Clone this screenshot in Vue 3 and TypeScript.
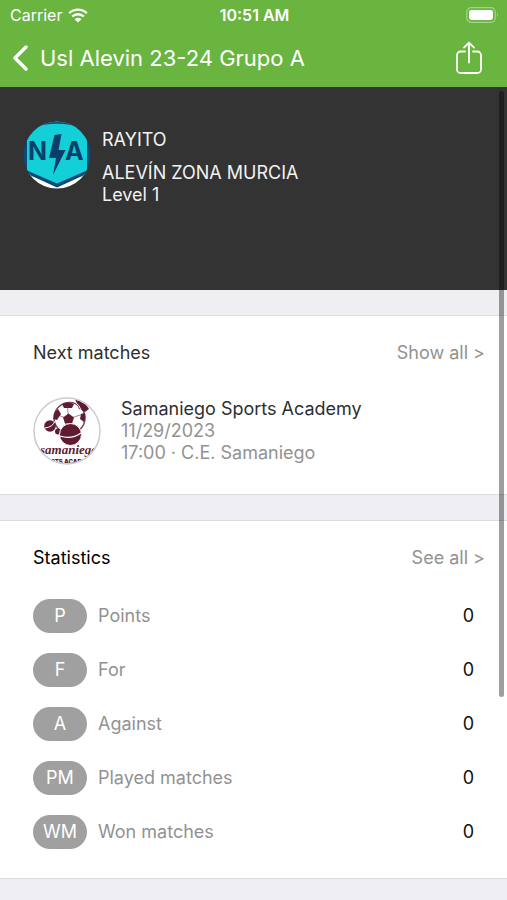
<script setup lang="ts">
interface Stat {
  code: string
  label: string
  value: number
}

const team = { name: 'RAYITO', league: 'ALEVÍN ZONA MURCIA', level: 'Level 1' }

const match = {
  opponent: 'Samaniego Sports Academy',
  date: '11/29/2023',
  place: '17:00 · C.E. Samaniego',
}

const stats: Stat[] = [
  { code: 'P', label: 'Points', value: 0 },
  { code: 'F', label: 'For', value: 0 },
  { code: 'A', label: 'Against', value: 0 },
  { code: 'PM', label: 'Played matches', value: 0 },
  { code: 'WM', label: 'Won matches', value: 0 },
]
</script>

<template>
  <div class="screen">
    <header class="top">
      <div class="status">
        <div class="carrier">
          <span>Carrier</span>
          <svg class="wifi" viewBox="0 0 20 15" aria-hidden="true">
            <path d="M1.2 5.2a12.6 12.6 0 0 1 17.6 0M4.2 8.5a8.4 8.4 0 0 1 11.6 0" fill="none" stroke="currentColor" stroke-width="2.4" />
            <path d="M10 14.6 6.6 11.2a4.9 4.9 0 0 1 6.8 0z" fill="currentColor" />
          </svg>
        </div>
        <time class="clock">10:51 AM</time>
        <svg class="battery" viewBox="0 0 33 16" aria-hidden="true">
          <rect x="0.7" y="0.7" width="28.6" height="14.6" rx="4.5" fill="none" stroke="#fff" stroke-opacity="0.4" stroke-width="1.2" />
          <rect x="3" y="3" width="24" height="10" rx="2.4" fill="#fff" />
          <path d="M31 5.5q1.8 2.5 0 5z" fill="#fff" fill-opacity="0.45" />
        </svg>
      </div>
      <nav class="bar">
        <button class="icon-button back" type="button" aria-label="Back">
          <svg class="chevron" viewBox="0 0 16 26" aria-hidden="true">
            <path d="M14 2 3 13l11 11" fill="none" stroke="currentColor" stroke-width="3.4" stroke-linecap="round" stroke-linejoin="round" />
          </svg>
        </button>
        <h1 class="title">Usl Alevin 23-24 Grupo A</h1>
        <button class="icon-button" type="button" aria-label="Share">
          <svg class="share" viewBox="0 0 28 34" aria-hidden="true">
            <g fill="none" stroke="currentColor" stroke-width="1.8" stroke-linecap="round" stroke-linejoin="round">
              <path d="M10 10.5H5.6A3.6 3.6 0 0 0 2 14.1v14.3A3.6 3.6 0 0 0 5.6 32h16.8a3.6 3.6 0 0 0 3.6-3.6V14.1a3.6 3.6 0 0 0-3.6-3.6H18" />
              <path d="M14 21.5V1.8M9 6.6l5-5 5 5" />
            </g>
          </svg>
        </button>
      </nav>
    </header>

    <main class="content">
      <section class="team">
        <svg class="crest" viewBox="0 0 68 68" role="img" aria-label="Team crest">
          <defs>
            <clipPath id="crest-clip"><circle cx="34" cy="34" r="33.5" /></clipPath>
          </defs>
          <g clip-path="url(#crest-clip)">
            <path d="M2 50 34 66 66 50V68H2z" fill="#fff" />
            <path d="M14 0H54V8H14z" fill="#8fa3a8" />
            <path d="M0 14Q14 4 22 2.200 34 0 46 2.200 54 4 68 14V51L34 66.500 0 51z" fill="#0b4a78" />
            <path d="M4 18Q8 13 11 9.500 15 5 20 4q14-2.500 28 0 5 1 9 5.500 3 3.500 7 8.500V49.500L34 62.500 4 49.500z" fill="#12cfd8" />
          </g>
          <text class="crest-text" x="5" y="39" fill="#0b3f6b">N</text>
          <text class="crest-text" x="42" y="39" fill="#0b3f6b">A</text>
          <path d="M31.500 14 38.500 13 35.500 29H42.500L30 54 33 37H26z" fill="#0b3f6b" />
        </svg>
        <div class="team-text">
          <h2 class="team-name">{{ team.name }}</h2>
          <p>{{ team.league }}</p>
          <p>{{ team.level }}</p>
        </div>
      </section>

      <section class="card">
        <div class="card-head">
          <h2>Next matches</h2>
          <a href="#matches">Show all &gt;</a>
        </div>
        <div class="match">
          <svg class="avatar" viewBox="0 0 68 68" role="img" aria-label="Samaniego crest">
            <defs>
              <clipPath id="avatar-clip"><circle cx="34" cy="34" r="32.5" /></clipPath>
            </defs>
            <circle cx="34" cy="34" r="33" fill="#fff" />
            <g clip-path="url(#avatar-clip)">
              <circle cx="36.5" cy="21" r="15.5" fill="#fff" stroke="#7a4455" stroke-width="1.5" />
              <path d="M35.500 22 34.500 9M35.500 22 22 17M35.500 22 50 17M35.500 22 29 34M35.500 22 44 34" stroke="#a98390" stroke-width="1" />
              <g fill="#5f1c31">
                <path d="M35.500 16.500 41 20.500 39 26.500H32L30 20.500z" />
                <path d="M29 7q6-3 12 0l-2 4h-8zM20.500 22q0-7 4.500-10l3 5-4 6zM48 17l4-1q1 5-1 9l-4-3z" />
                <path d="M42 2 50 3 56 12 52 15 46 12z" />
                <circle cx="17" cy="29" r="5.8" />
                <circle cx="25" cy="34.5" r="3" />
                <circle cx="37.5" cy="37.5" r="11" stroke="#fff" stroke-width="1" />
              </g>
              <path d="M40 3Q47 8 49 15M12 31q8-1 10-7" fill="none" stroke="#fff" stroke-width="1" />
              <path d="M27 39q11 4 21-3" fill="none" stroke="#fff" stroke-width="1.2" />
              <text class="script-text" x="7" y="57" fill="#5f1c31">samaniego</text>
              <text class="block-text" x="34" y="67" text-anchor="middle" fill="#5f1c31">SPORTS ACADEMY</text>
            </g>
            <circle cx="34" cy="34" r="33" fill="none" stroke="#ccc" stroke-width="1.5" />
          </svg>
          <div class="match-text">
            <h3>{{ match.opponent }}</h3>
            <p>{{ match.date }}</p>
            <p>{{ match.place }}</p>
          </div>
        </div>
      </section>

      <section class="card">
        <div class="card-head">
          <h2 class="strong">Statistics</h2>
          <a href="#statistics">See all &gt;</a>
        </div>
        <dl class="stats">
          <div v-for="stat in stats" :key="stat.code" class="stat">
            <dt>
              <span class="badge">{{ stat.code }}</span>
              <span>{{ stat.label }}</span>
            </dt>
            <dd>{{ stat.value }}</dd>
          </div>
        </dl>
      </section>
      <div class="scrollbar" aria-hidden="true"></div>
    </main>
  </div>
</template>

<style>
body {
  margin: 0;
  background: #eeeef3;
}
</style>

<style scoped>
.screen {
  min-height: 100vh;
  background: #eeeef3;
  color: #2f2f2f;
  font-family: Inter, "Liberation Sans", sans-serif;
  font-size: 18px;
  line-height: 22px;
}

h1,
h2,
h3,
p,
dl,
dd {
  margin: 0;
  font-size: inherit;
  font-weight: 400;
}

.top {
  background: #6ab440;
  color: #fff;
}

.status {
  display: grid;
  grid-template-columns: 1fr auto 1fr;
  align-items: center;
  height: 30px;
  padding: 0 8px 0 10px;
  font-size: 16px;
}

.carrier {
  display: flex;
  align-items: center;
  gap: 6px;
}

.wifi {
  width: 20px;
  height: 15px;
}

.clock {
  font-weight: 600;
}

.battery {
  justify-self: end;
  width: 33px;
  height: 16px;
}

.bar {
  display: flex;
  align-items: center;
  height: 57px;
  padding: 0 24px 2px 12px;
  box-sizing: border-box;
}

.icon-button {
  display: flex;
  padding: 0;
  border: 0;
  background: none;
  color: inherit;
  cursor: pointer;
}

.back {
  margin-right: 12px;
}

.chevron {
  width: 16px;
  height: 26px;
}

.share {
  width: 28px;
  height: 34px;
}

.title {
  flex: 1;
  font-size: 22px;
  line-height: 28px;
}

.content {
  position: relative;
}

.team {
  display: flex;
  align-items: flex-start;
  gap: 11px;
  min-height: 203px;
  padding: 34px 23px;
  box-sizing: border-box;
  background: #333;
  color: #f2f2f2;
}

.crest {
  flex: none;
  width: 68px;
  height: 68px;
}

.crest-text {
  font: 700 25px Inter, sans-serif;
}

.team-text {
  padding-top: 8px;
}

.team-name {
  margin-bottom: 11px;
}

.card {
  margin-top: 25px;
  padding: 26px 22px 29px 33px;
  border-top: 1px solid #dcdce0;
  border-bottom: 1px solid #dcdce0;
  background: #fff;
}

.card-head {
  display: flex;
  justify-content: space-between;
}

.card-head a {
  color: #929292;
  text-decoration: none;
}

.strong {
  color: #000;
}

.match {
  display: flex;
  align-items: center;
  gap: 20px;
  margin-top: 33px;
}

.avatar {
  flex: none;
  width: 68px;
  height: 68px;
}

.script-text {
  font: italic 700 13px "Liberation Serif", serif;
}

.block-text {
  font: 900 6px Inter, sans-serif;
}

.match-text {
  color: #929292;
}

.match-text h3 {
  color: #2f2f2f;
}

.stats {
  display: grid;
  gap: 20px;
  margin-top: 30px;
}

.stat {
  display: flex;
  align-items: center;
  justify-content: space-between;
  padding-right: 11px;
}

.stat dt {
  display: flex;
  align-items: center;
  gap: 11px;
  color: #929292;
}

.badge {
  width: 54px;
  border-radius: 17px;
  background: #a0a0a0;
  color: #fff;
  line-height: 34px;
  text-align: center;
}

.stat dd {
  color: #111;
}

.scrollbar {
  position: absolute;
  top: 4px;
  right: 3px;
  width: 5px;
  height: 606px;
  border-radius: 3px;
  background: rgba(0, 0, 0, 0.38);
}
</style>
